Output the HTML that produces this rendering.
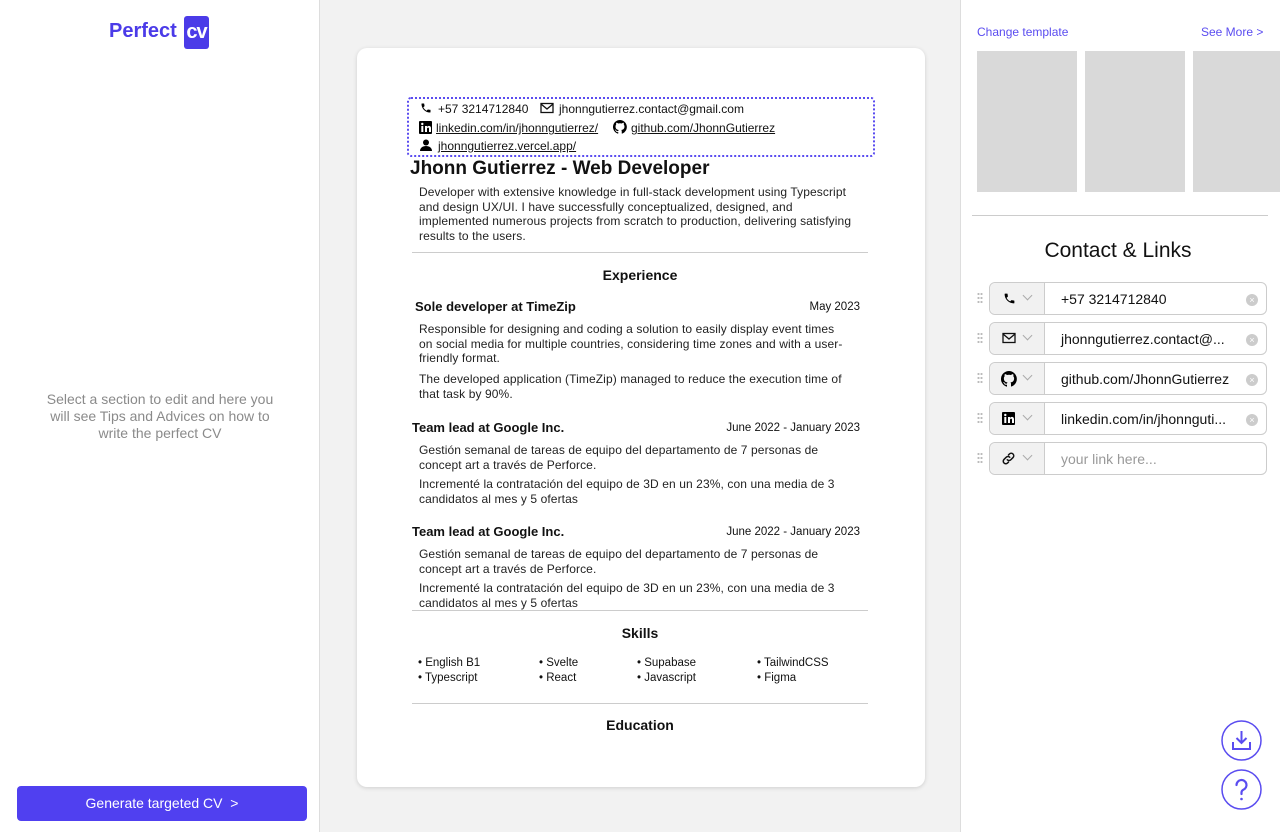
<!DOCTYPE html>
<html><head><meta charset="utf-8"><style>
*{box-sizing:border-box;margin:0;padding:0}
body{width:1280px;height:832px;overflow:hidden;font-family:"Liberation Sans",sans-serif;color:#111;background:#fff;position:relative}
.a{position:absolute;white-space:nowrap}
.left{left:0;top:0;width:320px;height:832px;border-right:1px solid #ddd;background:#fff}
.mid{left:320px;top:0;width:641px;height:832px;background:#f2f2f2;border-right:1px solid #ddd}
.card{left:357px;top:48px;width:568px;height:739px;background:#fff;border-radius:10px;box-shadow:0 1px 4px rgba(0,0,0,.15)}
.s12{font-size:12px}.s11{font-size:11px}
.p{font-size:12px;letter-spacing:0.1px;line-height:14.5px;color:#222}
.d{font-size:11.5px;right:420px;text-align:right}
u{text-decoration:underline}
.hr{height:1px;background:#ccc;left:412px;width:456px}
.row{left:989px;width:278px;height:33px;border:1px solid #ccc;border-radius:6px;background:#fff}
.row .ic{position:absolute;left:0;top:0;width:55px;height:31px;background:#f1f1f1;border-right:1px solid #ccc;border-radius:6px 0 0 6px}
.row .t{position:absolute;left:71px;top:8px;font-size:14px;color:#111}
.row .x{position:absolute;right:8px;top:11px;width:12px;height:12px;border-radius:6px;background:#ccc;color:#fff;font-size:9px;line-height:12px;text-align:center}
.chev{position:absolute;left:34px;top:9px;width:7px;height:7px;border-right:1px solid #aaa;border-bottom:1px solid #aaa;transform:rotate(45deg)}
.grip{position:absolute;left:-13px;top:9px;width:6px;height:12px;background-image:radial-gradient(circle,#bbb 1px,transparent 1.2px);background-size:3px 4px}
.b{font-weight:bold}
</style></head><body>
<div class="a left"></div>
<div class="a mid"></div>
<div class="a" style="left:109px;top:20px;font-size:20px;font-weight:bold;color:#4b3be8">Perfect</div>
<div class="a" style="left:184px;top:16px;width:25px;height:33px;background:#4b3be8;border-radius:3px;color:#fff;font-size:20px;font-weight:bold;line-height:33px;text-align:center;letter-spacing:-1px">cv</div>
<div class="a" style="left:45px;top:391px;width:230px;text-align:center;white-space:normal;font-size:14px;line-height:17px;color:#8a8a8a">Select a section to edit and here you will see Tips and Advices on how to write the perfect CV</div>
<div class="a" style="left:17px;top:786px;width:290px;height:35px;background:#5040f0;border-radius:4px;color:#fff;font-size:14px;line-height:35px;text-align:center">Generate targeted CV &nbsp;&gt;</div>

<div class="a card"></div>
<div class="a" style="left:407px;top:97px;width:468px;height:60px;border:2px dotted #5a4cf0;border-radius:4px"></div>
<svg class="a" style="left:420px;top:102px" width="12" height="12" viewBox="0 0 24 24"><path d="M6.6 10.8c1.4 2.8 3.8 5.1 6.6 6.6l2.2-2.2c.3-.3.7-.4 1-.2 1.1.4 2.3.6 3.6.6.6 0 1 .4 1 1V20c0 .6-.4 1-1 1C10.6 21 3 13.4 3 4c0-.6.4-1 1-1h3.5c.6 0 1 .4 1 1 0 1.3.2 2.5.6 3.6.1.3 0 .7-.2 1z"/></svg>
<div class="a s12" style="left:438px;top:102px">+57 3214712840</div>
<svg class="a" style="left:540px;top:102px" width="14" height="12" viewBox="0 0 14 12"><rect x="1" y="1.5" width="12" height="9" fill="none" stroke="#111" stroke-width="1.3"/><path d="M1 2l6 5 6-5" fill="none" stroke="#111" stroke-width="1.3"/></svg>
<div class="a s12" style="left:559px;top:102px">jhonngutierrez.contact@gmail.com</div>
<svg class="a" style="left:419px;top:121px" width="13" height="13" viewBox="0 0 13 13"><rect width="13" height="13" rx="1"/><rect x="2.3" y="5" width="2" height="6" fill="#fff"/><circle cx="3.3" cy="3" r="1.2" fill="#fff"/><path d="M6 5h2v1c.5-.8 1.3-1.2 2.2-1.1 1.2.1 1.8 1 1.8 2.4V11h-2V7.8c0-.8-.3-1.2-.9-1.2S8 7 8 7.8V11H6z" fill="#fff"/></svg>
<div class="a s12" style="left:436px;top:121px"><u>linkedin.com/in/jhonngutierrez/</u></div>
<svg class="a" style="left:613px;top:120px" width="14" height="14" viewBox="0 0 16 16"><path d="M8 0a8 8 0 0 0-2.5 15.6c.4 0 .5-.2.5-.4v-1.5c-2.2.5-2.7-1-2.7-1-.4-.9-.9-1.2-.9-1.2-.7-.5.1-.5.1-.5.8.1 1.2.8 1.2.8.7 1.3 1.9.9 2.3.7.1-.5.3-.9.5-1.1-1.8-.2-3.6-.9-3.6-4 0-.9.3-1.6.8-2.1-.1-.2-.4-1 .1-2.1 0 0 .7-.2 2.2.8a7.5 7.5 0 0 1 4 0c1.5-1 2.2-.8 2.2-.8.4 1.1.2 1.9.1 2.1.5.6.8 1.3.8 2.1 0 3.1-1.9 3.8-3.6 4 .3.3.5.8.5 1.5v2.2c0 .2.1.5.6.4A8 8 0 0 0 8 0z"/></svg>
<div class="a s12" style="left:631px;top:121px"><u>github.com/JhonnGutierrez</u></div>
<svg class="a" style="left:420px;top:139px" width="12" height="12" viewBox="0 0 12 12"><circle cx="6" cy="3.5" r="3"/><path d="M0 12c0-3 2.5-5 6-5s6 2 6 5z"/></svg>
<div class="a s12" style="left:438px;top:139px"><u>jhonngutierrez.vercel.app/</u></div>
<div class="a b" style="left:410px;top:158px;font-size:19px">Jhonn Gutierrez - Web Developer</div>
<div class="a p" style="left:419px;top:185px">Developer with extensive knowledge in full-stack development using Typescript<br>and design UX/UI. I have successfully conceptualized, designed, and<br>implemented numerous projects from scratch to production, delivering satisfying<br>results to the users.</div>
<div class="a hr" style="top:252px"></div>
<div class="a b" style="left:412px;width:456px;text-align:center;top:267px;font-size:14px">Experience</div>
<div class="a b" style="left:415px;top:299px;font-size:13px">Sole developer at TimeZip</div>
<div class="a d" style="top:301px">May 2023</div>
<div class="a p" style="left:419px;top:322px">Responsible for designing and coding a solution to easily display event times<br>on social media for multiple countries, considering time zones and with a user-<br>friendly format.</div>
<div class="a p" style="left:419px;top:372px">The developed application (TimeZip) managed to reduce the execution time of<br>that task by 90%.</div>
<div class="a b" style="left:412px;top:420px;font-size:13px">Team lead at Google Inc.</div>
<div class="a d" style="top:422px">June 2022 - January 2023</div>
<div class="a p" style="left:419px;top:443px">Gestión semanal de tareas de equipo del departamento de 7 personas de<br>concept art a través de Perforce.</div>
<div class="a p" style="left:419px;top:477px">Incrementé la contratación del equipo de 3D en un 23%, con una media de 3<br>candidatos al mes y 5 ofertas</div>
<div class="a b" style="left:412px;top:524px;font-size:13px">Team lead at Google Inc.</div>
<div class="a d" style="top:526px">June 2022 - January 2023</div>
<div class="a p" style="left:419px;top:547px">Gestión semanal de tareas de equipo del departamento de 7 personas de<br>concept art a través de Perforce.</div>
<div class="a p" style="left:419px;top:581px">Incrementé la contratación del equipo de 3D en un 23%, con una media de 3<br>candidatos al mes y 5 ofertas</div>
<div class="a hr" style="top:610px"></div>
<div class="a b" style="left:412px;width:456px;text-align:center;top:625px;font-size:14px">Skills</div>
<div class="a" style="left:418px;top:656px;line-height:14.5px;font-size:11.5px">• English B1<br>• Typescript</div>
<div class="a" style="left:539px;top:656px;line-height:14.5px;font-size:11.5px">• Svelte<br>• React</div>
<div class="a" style="left:637px;top:656px;line-height:14.5px;font-size:11.5px">• Supabase<br>• Javascript</div>
<div class="a" style="left:757px;top:656px;line-height:14.5px;font-size:11.5px">• TailwindCSS<br>• Figma</div>
<div class="a hr" style="top:703px"></div>
<div class="a b" style="left:412px;width:456px;text-align:center;top:717px;font-size:14px">Education</div>

<div class="a" style="left:977px;top:25px;font-size:12px;color:#5a4cf0">Change template</div>
<div class="a" style="left:1201px;top:25px;font-size:12px;color:#5a4cf0">See More &gt;</div>
<div class="a" style="left:977px;top:51px;width:100px;height:141px;background:#d9d9d9"></div>
<div class="a" style="left:1085px;top:51px;width:100px;height:141px;background:#d9d9d9"></div>
<div class="a" style="left:1193px;top:51px;width:100px;height:141px;background:#d9d9d9"></div>
<div class="a" style="left:972px;top:215px;width:296px;height:1px;background:#ccc"></div>
<div class="a" style="left:972px;top:239px;width:292px;text-align:center;font-size:21px">Contact &amp; Links</div>

<div class="a row" style="top:282px"><div class="grip"></div><div class="ic"><svg style="position:absolute;left:13px;top:9px" width="13" height="13" viewBox="0 0 24 24"><path d="M6.6 10.8c1.4 2.8 3.8 5.1 6.6 6.6l2.2-2.2c.3-.3.7-.4 1-.2 1.1.4 2.3.6 3.6.6.6 0 1 .4 1 1V20c0 .6-.4 1-1 1C10.6 21 3 13.4 3 4c0-.6.4-1 1-1h3.5c.6 0 1 .4 1 1 0 1.3.2 2.5.6 3.6.1.3 0 .7-.2 1z"/></svg><div class="chev"></div></div><div class="t">+57 3214712840</div><div class="x">×</div></div>
<div class="a row" style="top:322px"><div class="grip"></div><div class="ic"><svg style="position:absolute;left:12px;top:9px" width="14" height="12" viewBox="0 0 14 12"><rect x="1" y="1.5" width="12" height="9" fill="none" stroke="#111" stroke-width="1.3"/><path d="M1 2l6 5 6-5" fill="none" stroke="#111" stroke-width="1.3"/></svg><div class="chev"></div></div><div class="t">jhonngutierrez.contact@...</div><div class="x">×</div></div>
<div class="a row" style="top:362px"><div class="grip"></div><div class="ic"><svg style="position:absolute;left:11px;top:8px" width="16" height="16" viewBox="0 0 16 16"><path d="M8 0a8 8 0 0 0-2.5 15.6c.4 0 .5-.2.5-.4v-1.5c-2.2.5-2.7-1-2.7-1-.4-.9-.9-1.2-.9-1.2-.7-.5.1-.5.1-.5.8.1 1.2.8 1.2.8.7 1.3 1.9.9 2.3.7.1-.5.3-.9.5-1.1-1.8-.2-3.6-.9-3.6-4 0-.9.3-1.6.8-2.1-.1-.2-.4-1 .1-2.1 0 0 .7-.2 2.2.8a7.5 7.5 0 0 1 4 0c1.5-1 2.2-.8 2.2-.8.4 1.1.2 1.9.1 2.1.5.6.8 1.3.8 2.1 0 3.1-1.9 3.8-3.6 4 .3.3.5.8.5 1.5v2.2c0 .2.1.5.6.4A8 8 0 0 0 8 0z"/></svg><div class="chev"></div></div><div class="t">github.com/JhonnGutierrez</div><div class="x">×</div></div>
<div class="a row" style="top:402px"><div class="grip"></div><div class="ic"><svg style="position:absolute;left:12px;top:9px" width="13" height="13" viewBox="0 0 13 13"><rect width="13" height="13" rx="1"/><rect x="2.3" y="5" width="2" height="6" fill="#fff"/><circle cx="3.3" cy="3" r="1.2" fill="#fff"/><path d="M6 5h2v1c.5-.8 1.3-1.2 2.2-1.1 1.2.1 1.8 1 1.8 2.4V11h-2V7.8c0-.8-.3-1.2-.9-1.2S8 7 8 7.8V11H6z" fill="#fff"/></svg><div class="chev"></div></div><div class="t">linkedin.com/in/jhonnguti...</div><div class="x">×</div></div>
<div class="a row" style="top:442px"><div class="grip"></div><div class="ic"><svg style="position:absolute;left:11px;top:8px" width="15" height="15" viewBox="0 0 24 24" fill="none" stroke="#111" stroke-width="2.4" stroke-linecap="round"><path d="M10 14a4 4 0 0 0 5.7 0l3.5-3.5a4 4 0 0 0-5.7-5.7L12 6.3"/><path d="M14 10a4 4 0 0 0-5.7 0l-3.5 3.5a4 4 0 0 0 5.7 5.7L12 17.7"/></svg><div class="chev"></div></div><div class="t" style="color:#999">your link here...</div></div>

<svg class="a" style="left:1221px;top:720px" width="41" height="41" viewBox="0 0 41 41" fill="none" stroke="#5a4cf0" stroke-width="1.5"><circle cx="20.5" cy="20.5" r="19.5"/><path d="M20.5 11v12M15.5 18l5 5 5-5M12 22v7h17v-7" stroke-width="2"/></svg>
<svg class="a" style="left:1221px;top:769px" width="41" height="41" viewBox="0 0 41 41" fill="none" stroke="#5a4cf0" stroke-width="1.5"><circle cx="20.5" cy="20.5" r="19.5"/><path d="M15.5 16a5 5 0 1 1 7 4.6c-1.3.6-2 1.4-2 2.8V25" stroke-width="2.2" stroke-linecap="round"/><circle cx="20.5" cy="30" r="1.3" fill="#5a4cf0" stroke="none"/></svg>
</body></html>
